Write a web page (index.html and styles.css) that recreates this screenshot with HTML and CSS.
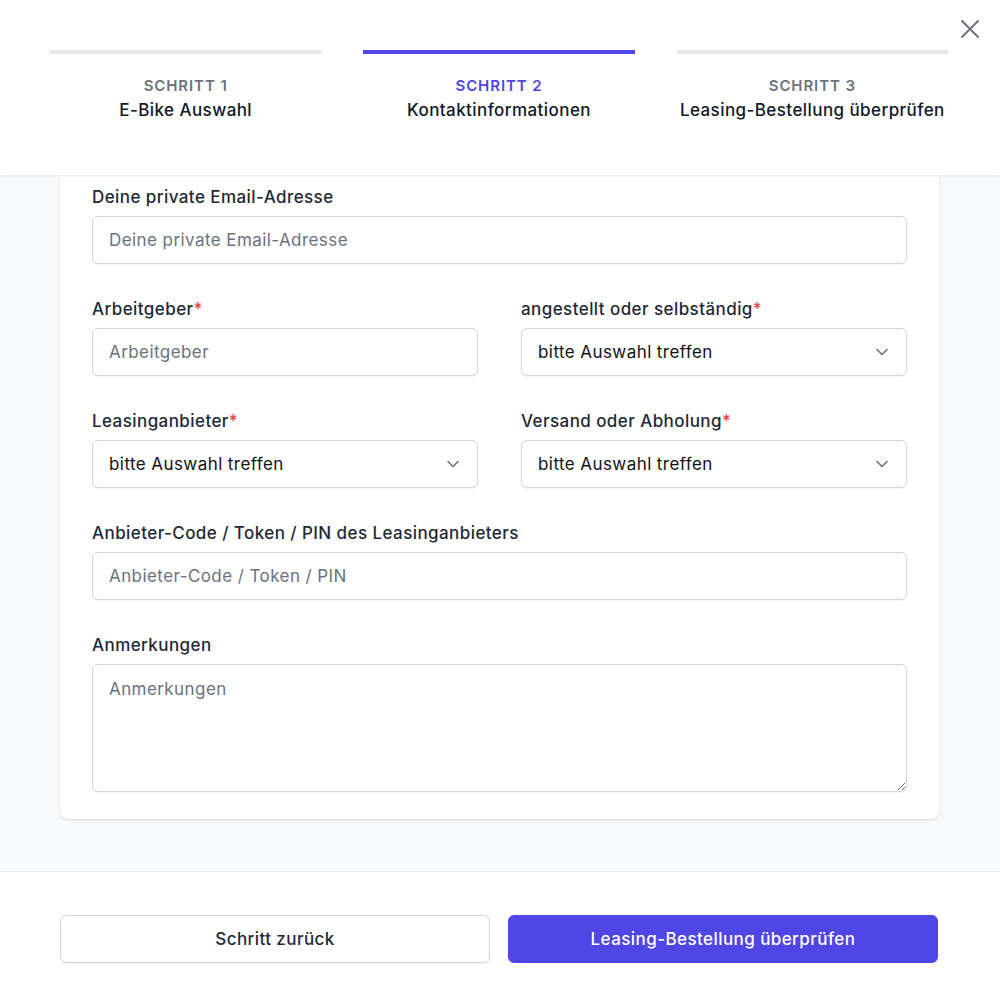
FILE: index.html
```html
<!DOCTYPE html>
<html lang="de">
<head>
    <meta charset="UTF-8">
    <meta name="viewport" content="width=device-width, initial-scale=1.0">
    <title>Leasing-Bestellung</title>
    <link rel="stylesheet" href="styles.css">
</head>
<body>
<div class="modal">
    <header class="steps-header">
        <button class="close-btn" aria-label="Schließen">
            <svg width="20" height="20" viewBox="0 0 20 20" fill="none" stroke="currentColor" stroke-width="2" stroke-linecap="round">
                <path d="M2 2 L18 18 M18 2 L2 18"/>
            </svg>
        </button>
        <ol class="steps">
            <li class="step">
                <div class="step-bar"></div>
                <div class="step-num">Schritt 1</div>
                <div class="step-title">E-Bike Auswahl</div>
            </li>
            <li class="step active">
                <div class="step-bar"></div>
                <div class="step-num">Schritt 2</div>
                <div class="step-title">Kontaktinformationen</div>
            </li>
            <li class="step">
                <div class="step-bar"></div>
                <div class="step-num">Schritt 3</div>
                <div class="step-title">Leasing-Bestellung überprüfen</div>
            </li>
        </ol>
    </header>

    <main class="content">
        <form class="card">
            <div class="field">
                <label for="email">Deine private Email-Adresse</label>
                <input type="email" id="email" class="control" placeholder="Deine private Email-Adresse">
            </div>

            <div class="row">
                <div class="field">
                    <label for="employer">Arbeitgeber<span class="req">*</span></label>
                    <input type="text" id="employer" class="control" placeholder="Arbeitgeber">
                </div>
                <div class="field">
                    <label for="employment">angestellt oder selbständig<span class="req">*</span></label>
                    <div class="select-wrap">
                        <select id="employment" class="control">
                            <option>bitte Auswahl treffen</option>
                            <option>angestellt</option>
                            <option>selbständig</option>
                        </select>
                        <svg class="chevron" width="14" height="14" viewBox="0 0 14 14" fill="none" stroke="currentColor" stroke-width="1.6" stroke-linecap="round" stroke-linejoin="round"><path d="M2 4.5 L7 9.5 L12 4.5"/></svg>
                    </div>
                </div>
            </div>

            <div class="row">
                <div class="field">
                    <label for="provider">Leasinganbieter<span class="req">*</span></label>
                    <div class="select-wrap">
                        <select id="provider" class="control">
                            <option>bitte Auswahl treffen</option>
                        </select>
                        <svg class="chevron" width="14" height="14" viewBox="0 0 14 14" fill="none" stroke="currentColor" stroke-width="1.6" stroke-linecap="round" stroke-linejoin="round"><path d="M2 4.5 L7 9.5 L12 4.5"/></svg>
                    </div>
                </div>
                <div class="field">
                    <label for="shipping">Versand oder Abholung<span class="req">*</span></label>
                    <div class="select-wrap">
                        <select id="shipping" class="control">
                            <option>bitte Auswahl treffen</option>
                            <option>Versand</option>
                            <option>Abholung</option>
                        </select>
                        <svg class="chevron" width="14" height="14" viewBox="0 0 14 14" fill="none" stroke="currentColor" stroke-width="1.6" stroke-linecap="round" stroke-linejoin="round"><path d="M2 4.5 L7 9.5 L12 4.5"/></svg>
                    </div>
                </div>
            </div>

            <div class="field">
                <label for="code">Anbieter-Code / Token / PIN des Leasinganbieters</label>
                <input type="text" id="code" class="control" placeholder="Anbieter-Code / Token / PIN">
            </div>

            <div class="field">
                <label for="notes">Anmerkungen</label>
                <textarea id="notes" class="control textarea" placeholder="Anmerkungen"></textarea>
            </div>
        </form>
    </main>

    <footer class="actions">
        <button type="button" class="btn btn-secondary">Schritt zurück</button>
        <button type="button" class="btn btn-primary">Leasing-Bestellung überprüfen</button>
    </footer>
</div>
</body>
</html>
```

FILE: styles.css
```css
* {
    box-sizing: border-box;
}

body {
    margin: 0;
    font-family: Inter, "Noto Sans", "Liberation Sans", sans-serif;
    font-size: 17px;
    letter-spacing: 0.025em;
    color: #1f2937;
    background-color: #ffffff;
}

.modal {
    display: flex;
    flex-direction: column;
    height: 1004px;
    width: 1000px;
}

/* Kopfbereich mit Schritten */
.steps-header {
    position: relative;
    z-index: 2;
    height: 175px;
    padding: 50px 52px 0 50px;
    background-color: #ffffff;
    box-shadow: 0 1px 3px rgba(0, 0, 0, 0.06), 0 1px 2px rgba(0, 0, 0, 0.03);
}

.close-btn {
    position: absolute;
    top: 19px;
    right: 20px;
    padding: 0;
    border: 0;
    background: none;
    color: #6b7280;
    cursor: pointer;
    line-height: 0;
}

.steps {
    display: grid;
    grid-template-columns: repeat(3, 1fr);
    gap: 42px;
    margin: 0;
    padding: 0;
    list-style: none;
}

.step {
    text-align: center;
}

.step-bar {
    height: 4px;
    background-color: #e5e7eb;
}

.step-num {
    margin-top: 22px;
    font-size: 15px;
    line-height: 20px;
    font-weight: 600;
    letter-spacing: 0.06em;
    text-transform: uppercase;
    color: #6b7280;
}

.step-title {
    margin-top: 2px;
    font-size: 17px;
    line-height: 24px;
    font-weight: 500;
    color: #111827;
}

.step.active .step-bar {
    background-color: #4f46e5;
}

.step.active .step-num {
    color: #4f46e5;
}

/* Formularbereich */
.content {
    flex: 1;
    overflow: hidden;
    background-color: #f9fafb;
    border-bottom: 1px solid #e5e7eb;
}

.card {
    display: flex;
    flex-direction: column;
    gap: 33px;
    width: 879px;
    margin-left: 60px;
    padding: 10px 32px 27px;
    background-color: #ffffff;
    border-radius: 0 0 8px 8px;
    box-shadow: 0 1px 3px rgba(0, 0, 0, 0.1), 0 1px 2px rgba(0, 0, 0, 0.06);
}

.row {
    display: grid;
    grid-template-columns: 1fr 1fr;
    gap: 43px;
}

.field label {
    display: block;
    margin-bottom: 7px;
    font-size: 17px;
    line-height: 24px;
    font-weight: 500;
    color: #1f2937;
}

.req {
    color: #ef4444;
}

.control {
    display: block;
    width: 100%;
    height: 48px;
    padding: 0 16px;
    border: 1px solid #d1d5db;
    border-radius: 6px;
    background-color: #ffffff;
    box-shadow: 0 1px 2px rgba(0, 0, 0, 0.05);
    font-family: inherit;
    font-size: 17px;
    letter-spacing: inherit;
    color: #111111;
}

.control::placeholder {
    color: #6b7280;
}

.select-wrap {
    position: relative;
}

select.control {
    appearance: none;
    -webkit-appearance: none;
    padding-right: 40px;
}

.chevron {
    position: absolute;
    top: 17px;
    right: 18px;
    color: #6b7280;
    pointer-events: none;
}

.textarea {
    height: 128px;
    padding: 12px 16px;
    line-height: 24px;
    resize: vertical;
}

/* Fußbereich */
.actions {
    display: grid;
    grid-template-columns: 1fr 1fr;
    gap: 18px;
    padding: 43px 62px 41px 60px;
    background-color: #ffffff;
}

.btn {
    height: 48px;
    border-radius: 6px;
    font-family: inherit;
    font-size: 17px;
    font-weight: 500;
    letter-spacing: inherit;
    cursor: pointer;
}

.btn-secondary {
    border: 1px solid #d1d5db;
    background-color: #ffffff;
    color: #1f2937;
    box-shadow: 0 1px 2px rgba(0, 0, 0, 0.05);
}

.btn-primary {
    border: 1px solid #4f46e5;
    background-color: #4f46e5;
    color: #ffffff;
}
```
